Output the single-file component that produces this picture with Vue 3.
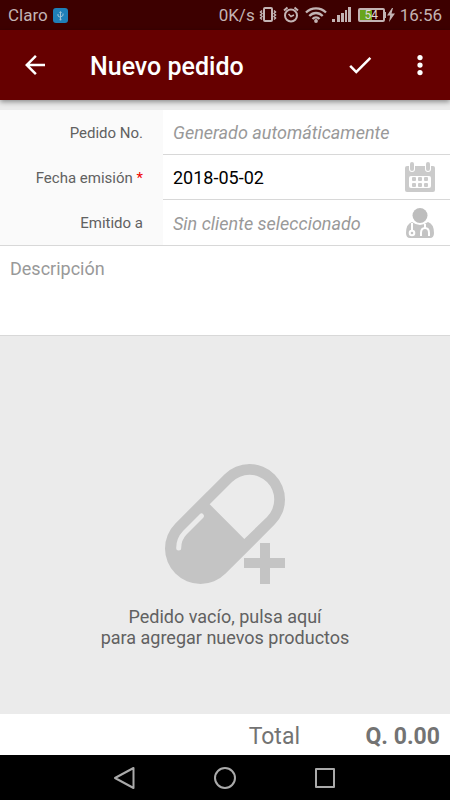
<script setup>
import { ref } from 'vue'

const orderNumber = ref('')
const issueDate = ref('2018-05-02')
const client = ref('')
const description = ref('')
const total = ref('Q. 0.00')

const dots = [
  [9, 17], [15, 17], [21, 17],
  [9, 23], [15, 23], [21, 23],
]
</script>

<template>
  <div class="screen">
    <div class="status">
      <span>Claro</span>
      <svg class="usb" width="15" height="15" viewBox="0 0 15 15">
        <rect width="15" height="15" rx="3" fill="#1f7fb8" />
        <path d="M7.500 4v7.500M5 6v2l2.500 1.500M10 5.500V7.500L7.500 9" fill="none" stroke="#9fc3d8" stroke-width="1" />
        <path d="M6 5l1.500-2L9 5z" fill="#9fc3d8" />
        <circle cx="7.500" cy="11.500" r="1" fill="#9fc3d8" />
      </svg>
      <div class="indicators">
        <span class="speed">0K/s</span>
        <svg width="18" height="18" viewBox="0 0 18 18" fill="none" stroke="currentColor">
          <rect x="5" y="2" width="8" height="13" rx="1" stroke-width="2" />
          <path d="M3 4.500L1.500 6L3 7.500L1.500 9L3 10.500L1.500 12L3 13.500M15 4.500L16.500 6L15 7.500L16.500 9L15 10.500L16.500 12L15 13.500" stroke-width="1.500" />
        </svg>
        <svg class="alarm" width="16" height="18" viewBox="0 0 16 18" fill="none" stroke="currentColor">
          <circle cx="8" cy="9.500" r="6" stroke-width="2" />
          <path d="M1 4.500L4.500 1.500M15 4.500L11.500 1.500" stroke-width="2" />
          <path d="M5.500 8L8 10.500L11 9" stroke-width="1.500" />
        </svg>
        <svg class="wifi" width="22" height="18" viewBox="0 0 22 18" fill="none" stroke="currentColor" stroke-width="2.300">
          <path d="M1 6.500C6.500 1 15.500 1 21 6.500M4.300 10C8.200 6 13.800 6 17.700 10M7.500 13C9.500 11 12.500 11 14.500 13" />
          <circle cx="11" cy="15" r="1.900" fill="currentColor" stroke="none" />
        </svg>
        <svg class="signal" width="20" height="18" viewBox="0 0 20 18" fill="currentColor">
          <rect x="0" y="13" width="3" height="3" />
          <rect x="5" y="9" width="3" height="7" />
          <rect x="9" y="7" width="3" height="9" />
          <rect x="13" y="4" width="2" height="12" />
          <rect x="16" y="1" width="3" height="15" />
        </svg>
        <span class="battery">
          <span class="level">54</span>
        </span>
        <svg class="bolt" width="10" height="14" viewBox="0 0 10 14" fill="currentColor">
          <path d="M0 4H1V10H0zM7 0L2 7.500H5.200L4 14L10 5.500H6.500L8 0z" />
        </svg>
        <span>16:56</span>
      </div>
    </div>

    <header class="bar">
      <button class="icon-button" type="button" aria-label="Atrás">
        <svg width="30" height="30" viewBox="0 0 24 24" fill="#fff">
          <path d="M20 11H7.830l5.590-5.590L12 4l-8 8 8 8 1.410-1.410L7.830 13H20v-2z" />
        </svg>
      </button>
      <h1>Nuevo pedido</h1>
      <button class="icon-button" type="button" aria-label="Guardar">
        <svg width="30" height="30" viewBox="0 0 24 24" fill="#fff">
          <path d="M9 16.170L4.830 12l-1.420 1.410L9 19 21 7l-1.410-1.410z" />
        </svg>
      </button>
      <button class="icon-button" type="button" aria-label="Más opciones">
        <svg width="30" height="30" viewBox="0 0 24 24" fill="#fff">
          <circle cx="12" cy="6" r="2.100" />
          <circle cx="12" cy="12" r="2.100" />
          <circle cx="12" cy="18" r="2.100" />
        </svg>
      </button>
    </header>

    <form class="form" @submit.prevent>
      <div class="row">
        <label for="number">Pedido No.</label>
        <div class="field">
          <input id="number" v-model="orderNumber" type="text" placeholder="Generado automáticamente" readonly />
        </div>
      </div>
      <div class="row">
        <label for="date">Fecha emisión <span class="required">*</span></label>
        <div class="field">
          <input id="date" v-model="issueDate" type="text" />
          <button class="pick" type="button" aria-label="Elegir fecha">
            <svg width="30" height="30" viewBox="0 0 30 30">
              <rect x="0" y="4" width="30" height="26" rx="2" fill="#cbcbcb" />
              <rect x="4" y="14" width="22" height="12" rx="2" fill="#fff" />
              <rect x="4" y="-1" width="6" height="11" rx="3" fill="#fff" />
              <rect x="20" y="-1" width="6" height="11" rx="3" fill="#fff" />
              <rect x="5" y="0" width="4" height="9" rx="2" fill="#cbcbcb" />
              <rect x="21" y="0" width="4" height="9" rx="2" fill="#cbcbcb" />
              <rect v-for="(d, i) in dots" :key="i" :x="d[0] - 2" :y="d[1] - 2" width="4" height="4" rx="1" fill="#cbcbcb" />
            </svg>
          </button>
        </div>
      </div>
      <div class="row">
        <label for="client">Emitido a</label>
        <div class="field">
          <input id="client" v-model="client" type="text" placeholder="Sin cliente seleccionado" />
          <button class="pick" type="button" aria-label="Elegir cliente">
            <svg width="30" height="30" viewBox="0 0 30 30">
              <circle cx="15" cy="7.500" r="7.500" fill="#bdbdbd" />
              <path d="M7 14Q15 20 23 14Q29 16 29 25Q29 30 25 30H5Q1 30 1 25Q1 16 7 14z" fill="#c4c4c4" />
              <path d="M7 15V23M20 16V20M16 28V25Q16 20 20 20Q24 20 24 25V28" fill="none" stroke="#fff" stroke-width="2" />
              <circle cx="7" cy="25" r="2.300" fill="#c4c4c4" stroke="#fff" stroke-width="2" />
            </svg>
          </button>
        </div>
      </div>
      <textarea v-model="description" aria-label="Descripción" placeholder="Descripción"></textarea>
    </form>

    <main class="products">
      <button class="empty" type="button">
        <svg width="120" height="120" viewBox="0 0 120 120">
          <path d="M35.500 84.500L84.500 35.500" stroke="#c4c4c4" stroke-width="71" stroke-linecap="round" />
          <path d="M44.700 40.300L67 18A24.700 24.700 0 0 1 102 53L79.300 75z" fill="#ebebeb" />
          <path d="M36.500 52L20 68.500Q13.700 75 13.700 84" fill="none" stroke="#ebebeb" stroke-width="5" stroke-linecap="round" />
          <path d="M95 79H105V94H120V104H105V120H95V104H79V94H95z" fill="#c4c4c4" />
        </svg>
        <span>Pedido vacío, pulsa aquí<br />para agregar nuevos productos</span>
      </button>
    </main>

    <footer class="total">
      <span>Total</span>
      <strong>{{ total }}</strong>
    </footer>

    <nav class="system">
      <button type="button" aria-label="Volver">
        <svg width="24" height="24" viewBox="0 0 24 24"><path d="M2 12L20.500 2V22z" /></svg>
      </button>
      <button type="button" aria-label="Inicio">
        <svg width="24" height="24" viewBox="0 0 24 24"><circle cx="12" cy="12" r="10" /></svg>
      </button>
      <button type="button" aria-label="Recientes">
        <svg width="24" height="24" viewBox="0 0 24 24"><rect x="3" y="3" width="18" height="18" /></svg>
      </button>
    </nav>
  </div>
</template>

<style>
body {
  margin: 0;
}
</style>

<style scoped>
.screen {
  display: flex;
  flex-direction: column;
  min-height: 100vh;
  background: #ebebeb;
  font-family: Roboto, "Liberation Sans", sans-serif;
}

button {
  padding: 0;
  border: 0;
  background: none;
  font: inherit;
  color: inherit;
  cursor: pointer;
}

svg {
  display: block;
  flex: none;
}

.status {
  display: flex;
  align-items: center;
  height: 30px;
  padding: 0 8px;
  background: #3d0000;
  color: #c3b4b4;
  font-size: 17px;
}

.usb {
  margin-left: 5px;
}

.indicators {
  display: flex;
  align-items: center;
  margin-left: auto;
}

.speed {
  margin-right: 4px;
}

.alarm {
  margin-left: 6px;
}

.wifi {
  margin-left: 6px;
}

.signal {
  margin-left: 5px;
}

.battery {
  box-sizing: border-box;
  width: 27px;
  height: 14px;
  margin-left: 6px;
  border: 2px solid #c3b4b4;
  border-radius: 2px;
  background: linear-gradient(to right, #68a51c 54%, #3d0000 54%);
}

.level {
  display: block;
  color: #e0d8d8;
  font-size: 12px;
  line-height: 11px;
  text-align: center;
}

.bolt {
  margin-right: 5px;
}

.bar {
  position: relative;
  display: flex;
  align-items: center;
  height: 70px;
  background: #660000;
  box-shadow: 0 2px 5px rgba(0, 0, 0, 0.4);
}

.bar h1 {
  flex: 1;
  margin: 0;
  padding: 2px 0 0 20px;
  color: #fff;
  font-size: 25px;
  font-weight: 500;
}

.icon-button {
  display: grid;
  place-items: center;
  width: 60px;
  height: 60px;
}

.icon-button:first-child {
  margin-left: 5px;
  margin-right: 5px;
}

.form {
  margin-top: 10px;
  border-bottom: 1px solid #d8d8d8;
  background: #fff;
}

.row {
  display: flex;
  height: 45px;
}

.row label {
  box-sizing: border-box;
  width: 163px;
  padding-right: 20px;
  background: #fafafa;
  color: #616161;
  font-size: 15px;
  line-height: 46px;
  text-align: right;
}

.required {
  color: #f00000;
}

.field {
  display: flex;
  flex: 1;
  align-items: center;
  min-width: 0;
  padding: 0 15px 0 10px;
  border-bottom: 1px solid #d8d8d8;
}

.row:nth-child(3) {
  border-bottom: 1px solid #d8d8d8;
}

.row:nth-child(3) .field {
  border-bottom: 0;
}

.field input {
  flex: 1;
  min-width: 0;
  height: 44px;
  padding: 1px 0 0;
  box-sizing: border-box;
  border: 0;
  outline: 0;
  background: none;
  color: #000;
  font: 18px Roboto, "Liberation Sans", sans-serif;
}

.field input::placeholder {
  color: #999;
  font-style: italic;
}

textarea {
  display: block;
  box-sizing: border-box;
  width: 100%;
  height: 89px;
  padding: 12px 10px;
  border: 0;
  outline: 0;
  resize: none;
  background: #fff;
  color: #000;
  font: 18px Roboto, "Liberation Sans", sans-serif;
}

textarea::placeholder {
  color: #999;
}

.products {
  display: flex;
  flex: 1;
  flex-direction: column;
}

.empty {
  display: flex;
  flex: 1;
  flex-direction: column;
  align-items: center;
  justify-content: center;
  gap: 22px;
  padding-top: 62px;
  color: #616161;
  font-size: 18px;
  line-height: 21px;
}

.total {
  display: flex;
  align-items: center;
  justify-content: flex-end;
  height: 41px;
  padding: 3px 10px 0;
  box-sizing: border-box;
  background: #fff;
  color: #737373;
  font-size: 23px;
}

.total strong {
  min-width: 140px;
  font-weight: 700;
  text-align: right;
}

.system {
  display: flex;
  justify-content: center;
  height: 45px;
  background: #000;
}

.system button {
  display: grid;
  place-items: center;
  width: 100px;
}

.system svg {
  fill: none;
  stroke: #aaa;
  stroke-width: 2;
  stroke-linejoin: round;
}
</style>
